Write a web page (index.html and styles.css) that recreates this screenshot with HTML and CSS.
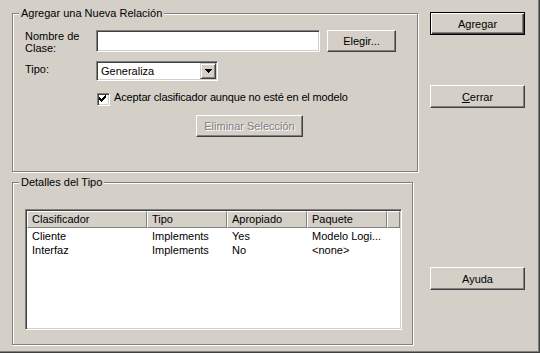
FILE: index.html
```html
<!DOCTYPE html>
<html lang="es">
<head>
    <meta charset="UTF-8">
    <title>Agregar una Nueva Relación</title>
    <link rel="stylesheet" href="styles.css">
</head>
<body>

    <div class="dialog">
        <div class="main">
            <!-- Agregar relación -->
            <div class="group group-add">
                <span class="group-title">Agregar una Nueva Relación</span>

                <div class="field-row row-name">
                    <label class="field-label" for="className">Nombre de<br>Clase:</label>
                    <input class="textbox" id="className" type="text">
                    <button type="button" class="btn btn-choose">Elegir...</button>
                </div>

                <div class="field-row row-type">
                    <label class="field-label label-type">Tipo:</label>
                    <div class="combo">
                        <span class="combo-value">Generaliza</span>
                        <span class="combo-arrow">
                            <svg width="7" height="4" viewBox="0 0 7 4" shape-rendering="crispEdges">
                                <rect x="0" y="0" width="7" height="1"/>
                                <rect x="1" y="1" width="5" height="1"/>
                                <rect x="2" y="2" width="3" height="1"/>
                                <rect x="3" y="3" width="1" height="1"/>
                            </svg>
                        </span>
                    </div>
                </div>

                <div class="check-row">
                    <span class="checkbox">
                        <svg width="9" height="9" viewBox="0 0 9 9" shape-rendering="crispEdges">
                            <rect x="7" y="1" width="1" height="1"/>
                            <rect x="6" y="2" width="2" height="1"/>
                            <rect x="1" y="3" width="1" height="1"/>
                            <rect x="5" y="3" width="3" height="1"/>
                            <rect x="1" y="4" width="2" height="1"/>
                            <rect x="4" y="4" width="3" height="1"/>
                            <rect x="1" y="5" width="5" height="1"/>
                            <rect x="2" y="6" width="3" height="1"/>
                            <rect x="3" y="7" width="1" height="1"/>
                        </svg>
                    </span>
                    <span class="check-text">Aceptar clasificador aunque no esté en el modelo</span>
                </div>

                <div class="action-row">
                    <button type="button" class="btn btn-remove" disabled>Eliminar Selección</button>
                </div>
            </div>

            <!-- Detalles -->
            <div class="group group-details">
                <span class="group-title">Detalles del Tipo</span>

                <div class="listview">
                    <div class="list-head">
                        <div class="head-cell">Clasificador</div>
                        <div class="head-cell">Tipo</div>
                        <div class="head-cell">Apropiado</div>
                        <div class="head-cell">Paquete</div>
                        <div class="head-cell head-fill"></div>
                    </div>
                    <div class="list-body">
                        <div class="list-row">
                            <span>Cliente</span>
                            <span>Implements</span>
                            <span>Yes</span>
                            <span>Modelo Logi...</span>
                        </div>
                        <div class="list-row">
                            <span>Interfaz</span>
                            <span>Implements</span>
                            <span>No</span>
                            <span>&lt;none&gt;</span>
                        </div>
                    </div>
                </div>
            </div>
        </div>

        <div class="side">
            <button type="button" class="btn btn-side btn-default">Agregar</button>
            <button type="button" class="btn btn-side btn-close"><u>C</u>errar</button>
            <button type="button" class="btn btn-side btn-help">Ayuda</button>
        </div>
    </div>

</body>
</html>
```

FILE: styles.css
```css
body {
    margin: 0;
    font-family: "Liberation Sans", Arial, sans-serif;
    font-size: 11px;
    color: #000;
    background-color: #d4d0c8;
}

.dialog {
    display: flex;
    width: 540px;
    height: 353px;
    box-sizing: border-box;
    background: #d4d0c8;
    box-shadow: inset -1px -1px 0 #404040, inset -2px -2px 0 #808080;
}

.main {
    flex: none;
    width: 418px;
}

/* group boxes */
.group {
    position: relative;
    box-sizing: border-box;
    border: 1px solid #808080;
    box-shadow: 1px 1px 0 #fff, inset 1px 1px 0 #fff;
}

.group-title {
    position: absolute;
    top: -7px;
    left: 6px;
    padding: 0 2px;
    line-height: 13px;
    background: #d4d0c8;
    white-space: nowrap;
}

.group-add {
    margin: 13px 0 0 12px;
    width: 406px;
    height: 159px;
    padding: 16px 0 0 12px;
}

.group-details {
    margin: 10px 0 0 12px;
    width: 401px;
    height: 163px;
    padding: 26px 0 0 12px;
}

/* form rows */
.field-row {
    display: flex;
    align-items: flex-start;
}

.row-name {
    height: 22px;
}

.row-type {
    margin-top: 9px;
}

.field-label {
    flex: none;
    width: 71px;
    line-height: 12px;
}

.label-type {
    margin-top: 2px;
    line-height: 13px;
}

.textbox {
    width: 224px;
    height: 22px;
    box-sizing: border-box;
    margin: 0;
    padding: 0 3px;
    font: inherit;
    background: #fff;
    border: 1px solid;
    border-color: #808080 #fff #fff #808080;
    box-shadow: inset 1px 1px 0 #404040, inset -1px -1px 0 #d4d0c8;
    outline: none;
}

.combo {
    display: flex;
    width: 122px;
    height: 20px;
    box-sizing: border-box;
    background: #fff;
    border: 1px solid;
    border-color: #808080 #fff #fff #808080;
    box-shadow: inset 1px 1px 0 #404040, inset -1px -1px 0 #d4d0c8;
    padding: 1px;
}

.combo-value {
    padding-left: 3px;
    line-height: 16px;
}

.combo-arrow {
    display: flex;
    align-items: center;
    justify-content: center;
    margin-left: auto;
    width: 16px;
    height: 16px;
    box-sizing: border-box;
    background: #d4d0c8;
    border: 1px solid;
    border-color: #d4d0c8 #404040 #404040 #d4d0c8;
    box-shadow: inset 1px 1px 0 #fff, inset -1px -1px 0 #808080;
}

.check-row {
    display: flex;
    align-items: flex-start;
    margin: 12px 0 0 72px;
}

.checkbox {
    display: flex;
    flex: none;
    width: 13px;
    height: 13px;
    box-sizing: border-box;
    margin-right: 4px;
    background: #fff;
    border: 1px solid;
    border-color: #808080 #fff #fff #808080;
    box-shadow: inset 1px 1px 0 #404040, inset -1px -1px 0 #d4d0c8;
    padding: 1px;
}

.checkbox svg {
    margin: -1px 0 0 -1px;
}

.check-text {
    margin-top: -2px;
    line-height: 13px;
    letter-spacing: -0.15px;
    white-space: nowrap;
}

.action-row {
    margin: 9px 0 0 171px;
}

/* buttons */
.btn {
    display: flex;
    align-items: center;
    justify-content: center;
    box-sizing: border-box;
    margin: 0;
    padding: 0;
    font: inherit;
    color: #000;
    background: #d4d0c8;
    border: 1px solid;
    border-color: #fff #404040 #404040 #fff;
    box-shadow: inset -1px -1px 0 #808080;
    cursor: pointer;
}

.btn-choose {
    margin-left: 7px;
    width: 69px;
    height: 22px;
}

.btn-remove {
    width: 107px;
    height: 22px;
    color: #808080;
    text-shadow: 1px 1px 0 #fff;
    cursor: default;
}

.side {
    display: flex;
    flex-direction: column;
    margin-left: 12px;
    padding-top: 12px;
}

.btn-side {
    width: 95px;
    height: 23px;
}

.btn-default {
    border-color: #000;
    box-shadow: inset 1px 1px 0 #fff, inset -1px -1px 0 #404040, inset -2px -2px 0 #808080;
}

.btn-close {
    margin-top: 50px;
}

.btn-help {
    margin-top: 159px;
}

/* list view */
.listview {
    width: 377px;
    height: 121px;
    box-sizing: border-box;
    background: #fff;
    border: 1px solid;
    border-color: #808080 #fff #fff #808080;
    box-shadow: inset 1px 1px 0 #404040, inset -1px -1px 0 #d4d0c8;
    padding: 1px;
}

.list-head,
.list-row {
    display: grid;
    grid-template-columns: 120px 80px 80px 80px 1fr;
}

.head-cell {
    height: 17px;
    box-sizing: border-box;
    padding-left: 4px;
    line-height: 15px;
    background: #d4d0c8;
    border: 1px solid;
    border-color: #fff #808080 #808080 #fff;
    white-space: nowrap;
}

.list-body {
    padding-top: 1px;
}

.list-row span {
    padding-left: 5px;
    line-height: 14px;
    white-space: nowrap;
}
```
